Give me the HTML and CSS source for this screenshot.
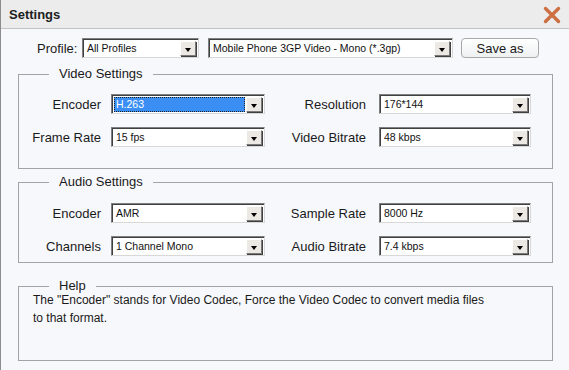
FILE: index.html
```html
<!DOCTYPE html>
<html>
  <head>
    <meta charset="utf-8" />
    <title>Settings</title>
    <link rel="stylesheet" href="styles.css">
  </head>

  <body>
    <div class="dialog">
      <div class="titlebar">
        <span class="title">Settings</span>
        <svg class="close" width="18" height="18" viewBox="0 0 18 18">
          <path d="M2.5 2.5 L15.5 15.5 M15.5 2.5 L2.5 15.5" stroke="#cd6f42" stroke-width="3.4" stroke-linecap="round" />
        </svg>
      </div>

      <div class="profile-row">
        <span class="label">Profile:</span>
        <div class="combo w-profile"><span class="value">All Profiles</span><span class="arrow"></span></div>
        <div class="combo w-preset"><span class="value">Mobile Phone 3GP Video - Mono (*.3gp)</span><span class="arrow"></span></div>
        <button class="btn">Save as</button>
      </div>

      <fieldset class="group video">
        <legend>Video Settings</legend>
        <div class="grid">
          <span class="label">Encoder</span>
          <div class="combo"><span class="value selected">H.263</span><span class="arrow"></span></div>
          <span class="label second">Resolution</span>
          <div class="combo"><span class="value">176*144</span><span class="arrow"></span></div>

          <span class="label">Frame Rate</span>
          <div class="combo"><span class="value">15 fps</span><span class="arrow"></span></div>
          <span class="label second">Video Bitrate</span>
          <div class="combo"><span class="value">48 kbps</span><span class="arrow"></span></div>
        </div>
      </fieldset>

      <fieldset class="group audio">
        <legend>Audio Settings</legend>
        <div class="grid">
          <span class="label">Encoder</span>
          <div class="combo"><span class="value">AMR</span><span class="arrow"></span></div>
          <span class="label second">Sample Rate</span>
          <div class="combo"><span class="value">8000 Hz</span><span class="arrow"></span></div>

          <span class="label">Channels</span>
          <div class="combo"><span class="value">1 Channel Mono</span><span class="arrow"></span></div>
          <span class="label second">Audio Bitrate</span>
          <div class="combo"><span class="value">7.4 kbps</span><span class="arrow"></span></div>
        </div>
      </fieldset>

      <fieldset class="group help">
        <legend>Help</legend>
        <p>The "Encoder" stands for Video Codec, Force the Video Codec to convert media files to that format.</p>
      </fieldset>
    </div>
  </body>
</html>
```

FILE: styles.css
```css
* {
  margin: 0;
  padding: 0;
  box-sizing: border-box;
}

body {
  font-family: "Liberation Sans", Arial, sans-serif;
  font-size: 13px;
  color: #1a1a1a;
  background-color: #f7f8fc;
}

.dialog {
  width: 569px;
  height: 370px;
  border-left: 1px solid #8c8c8c;
  background-color: #f7f8fc;
}

.titlebar {
  height: 29px;
  background-color: #ececec;
  border-bottom: 1px solid #c4c4c4;
  display: flex;
  align-items: center;
  justify-content: space-between;
  padding: 0 8px 0 8px;
}

.title {
  font-weight: bold;
  font-size: 13px;
  color: #202020;
}

.close {
  margin-top: 1px;
}

.profile-row {
  display: flex;
  align-items: center;
  height: 20px;
  margin-top: 9px;
  padding-left: 36px;
}

.profile-row .label {
  width: 45px;
}

.w-profile {
  width: 117px;
  margin-right: 9px;
}

.w-preset {
  width: 245px;
  margin-right: 8px;
}

.btn {
  width: 78px;
  height: 20px;
  border: 1px solid #a9a9a9;
  border-radius: 4px;
  background: linear-gradient(#ffffff, #eef0f2);
  font-family: "Liberation Sans", Arial, sans-serif;
  font-size: 13px;
  color: #1a1a1a;
}

/* combo box */
.combo {
  height: 20px;
  display: flex;
  align-items: stretch;
  background-color: #fff;
  border-top: 1px solid #7f7f7f;
  border-left: 1px solid #7f7f7f;
  border-right: 1px solid #d8d8d8;
  border-bottom: 1px solid #d8d8d8;
  box-shadow: inset 1px 1px 0 #404040;
  padding: 2px 2px 1px 2px;
}

.combo .value {
  flex: 1;
  font-size: 10.5px;
  line-height: 15px;
  padding-left: 2px;
  color: #111;
  white-space: nowrap;
  overflow: hidden;
}

.combo .value.selected {
  background-color: #3b8ef4;
  color: #fff;
  outline: 1px dotted #222;
  outline-offset: -1px;
  margin-right: 1px;
}

.combo .arrow {
  width: 16px;
  background-color: #ece9e4;
  border-top: 1px solid #fff;
  border-left: 1px solid #fff;
  border-right: 1px solid #7a7a7a;
  border-bottom: 1px solid #7a7a7a;
  box-shadow: 1px 1px 0 #404040;
  position: relative;
}

.combo .arrow::after {
  content: "";
  position: absolute;
  left: 4px;
  top: 6px;
  border-left: 3.5px solid transparent;
  border-right: 3.5px solid transparent;
  border-top: 4px solid #000;
}

/* groups */
.group {
  margin-left: 17px;
  width: 535px;
  border: 1px solid #a3a3a3;
  padding: 0;
}

.group legend {
  margin-left: 30px;
  padding: 0 10px;
  font-size: 13px;
  line-height: 16px;
  color: #1a1a1a;
}

.video {
  margin-top: 8px;
  height: 103px;
}

.audio {
  margin-top: 5px;
  height: 89px;
}

.help {
  margin-top: 15px;
  height: 83px;
}

.grid {
  display: grid;
  grid-template-columns: 92px 154px 114px 152px;
  grid-auto-rows: 20px;
  row-gap: 13px;
  align-items: center;
}

.video .grid {
  margin-top: 12px;
}

.audio .grid {
  margin-top: 13px;
}

.grid .label {
  text-align: right;
  padding-right: 10px;
}

.grid .label.second {
  padding-right: 13px;
}

.help p {
  width: 470px;
  padding-left: 14px;
  font-size: 12px;
  line-height: 18px;
  margin-top: -3px;
}
```
